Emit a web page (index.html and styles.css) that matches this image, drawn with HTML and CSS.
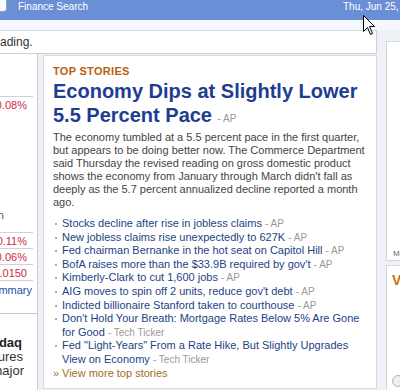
FILE: index.html
```html
<!DOCTYPE html>
<html>
<head>
<meta charset="utf-8">
<link rel="stylesheet" href="styles.css">
</head>
<body>
<div class="topbar">
  <div class="btn-edge"></div>
  <span class="brand">Finance Search</span>
  <span class="date">Thu, Jun 25, 2009</span>
</div>
<div class="band"></div>
<div class="wrap">
  <div class="leftmain">
    <div class="status">ading.</div>
    <div class="cols">
      <aside class="lcol">
        <div class="lc-top"></div>
        <div class="lc-row red">0.08%</div>
        <div class="lc-note">Currency Conversion</div>
        <div class="lc-row red first">0.11%</div>
        <div class="lc-row red">0.06%</div>
        <div class="lc-row red">1.0150</div>
        <div class="lc-row sum"><a>Summary</a></div>
        <div class="lc-section">
          <div class="lc-line bold r22">Nasdaq</div>
          <div class="lc-line r23">futures</div>
          <div class="lc-line r24">major</div>
        </div>
      </aside>
      <main class="panel">
        <div class="kicker">TOP STORIES</div>
        <h1 class="headline"><a>Economy Dips at Slightly Lower 5.5 Percent Pace</a> <span class="src">- AP</span></h1>
        <p class="summary">The economy tumbled at a 5.5 percent pace in the first quarter, but appears to be doing better now. The Commerce Department said Thursday the revised reading on gross domestic product shows the economy from January through March didn't fall as deeply as the 5.7 percent annualized decline reported a month ago.</p>
        <ul class="stories">
          <li><a>Stocks decline after rise in jobless claims</a> <span class="src">- AP</span></li>
          <li><a>New jobless claims rise unexpectedly to 627K</a> <span class="src">- AP</span></li>
          <li><a>Fed chairman Bernanke in the hot seat on Capitol Hill</a> <span class="src">- AP</span></li>
          <li><a>BofA raises more than the $33.9B required by gov't</a> <span class="src">- AP</span></li>
          <li><a>Kimberly-Clark to cut 1,600 jobs</a> <span class="src">- AP</span></li>
          <li><a>AIG moves to spin off 2 units, reduce gov't debt</a> <span class="src">- AP</span></li>
          <li><a>Indicted billionaire Stanford taken to courthouse</a> <span class="src">- AP</span></li>
          <li><a>Don't Hold Your Breath: Mortgage Rates Below 5% Are Gone for Good</a> <span class="src">- Tech Ticker</span></li>
          <li><a>Fed "Light-Years" From a Rate Hike, But Slightly Upgrades View on Economy</a> <span class="src">- Tech Ticker</span></li>
        </ul>
        <div class="more"><span class="raquo">»</span><a>View more top stories</a></div>
      </main>
    </div>
  </div>
  <div class="rcol">
    <div class="rpanel r1"><span class="tiny">Ma</span></div>
    <div class="rpanel r2"><span class="vhead">V</span><span class="circle"></span></div>
  </div>
</div>
<svg class="cursor" width="13" height="21" viewBox="0 0 13 21"><path d="M0.5 0.5 L0.5 16.5 L4.5 12.5 L7.5 19.5 L9.5 18.5 L6.5 11.5 L11.5 11.5 Z" fill="#fff" stroke="#000" stroke-width="1"/></svg>
</body>
</html>
```

FILE: styles.css
```css
body {
  margin: 0;
  width: 400px;
  height: 390px;
  overflow: hidden;
  position: relative;
  background: #eef1f5;
  font-family: "Liberation Sans", Arial, sans-serif;
}
a { text-decoration: none; }

.topbar {
  display: grid;
  grid-template-columns: 18px 325px max-content;
  width: 450px;
  height: 20px;
  background: #6b8fd6;
  color: #fff;
  font-size: 10px;
  line-height: 12px;
}
.btn-edge {
  width: 7px;
  height: 12px;
  box-sizing: border-box;
  background: #fbfbfc;
  border: 1px solid #8e9fbf;
  border-left: 0;
  border-top: 0;
  border-radius: 0 0 3px 0;
}
.brand, .date { padding-top: 1px; white-space: nowrap; }

.band { height: 10px; background: #f4f7fb; }

.wrap { display: flex; }
.leftmain { width: 377px; flex: none; }
.status {
  height: 22px;
  border-top: 1px solid #d5dae0;
  border-bottom: 1px solid #cfcfcf;
  border-right: 1px solid #cfcfcf;
  background: #fff;
  font-size: 12px;
  line-height: 22px;
  color: #333;
}
.cols { display: flex; align-items: flex-start; height: 340px; }

.lcol {
  width: 38px;
  height: 340px;
  flex: none;
  box-sizing: border-box;
  border-right: 1px solid #cfcfcf;
  background: #fff;
  overflow: hidden;
  font-size: 11px;
  white-space: nowrap;
}
.lc-top { height: 42px; }
.lc-row {
  display: flex;
  justify-content: flex-end;
  align-items: center;
  height: 16px;
  box-sizing: border-box;
  border-top: 1px solid #cdd3da;
  margin-right: 4px;
  padding-right: 6px;
}
.red { color: #cc2b3d; }
.lc-note {
  display: flex;
  justify-content: flex-end;
  align-items: center;
  height: 16px;
  margin-top: 95px;
  margin-bottom: 9px;
  padding-right: 33px;
  color: #555;
}
.lc-row.sum { height: 18px; padding-right: 1px; }
.sum a { color: #2a4a9e; }
.lc-section {
  margin-top: 15px;
  border-top: 1px solid #c4c4c4;
  padding-top: 22px;
  font-size: 13px;
  line-height: 14px;
  color: #333;
}
.lc-line { display: flex; justify-content: flex-end; }
.bold { font-weight: bold; color: #222; }
.r22 { padding-right: 15px; }
.r23 { padding-right: 14px; }
.r24 { padding-right: 13px; }

.panel {
  width: 334px;
  height: 334px;
  flex: none;
  box-sizing: border-box;
  margin: 1px 0 0 5px;
  border: 1px solid #d9dbde;
  background: #fff;
  padding: 9px 7px 0 9px;
  color: #444;
}
.kicker {
  font-size: 11px;
  line-height: 13px;
  font-weight: bold;
  color: #b8600f;
  letter-spacing: 0.3px;
}
.headline {
  margin: 1px 0 0;
  font-size: 20px;
  line-height: 24px;
  font-weight: bold;
}
.headline a { color: #1d3d93; }
.src { font-size: 10px; font-weight: normal; color: #999; }
.summary {
  margin: 0;
  font-size: 11px;
  line-height: 13px;
  color: #444;
}
.stories {
  list-style: none;
  margin: 8px 0 0;
  padding: 0;
  font-size: 11px;
  line-height: 13.6px;
}
.stories li {
  padding-left: 9px;
  background: linear-gradient(#aaa, #aaa) no-repeat 2px 6px / 2px 2px;
}
.stories a { color: #233f85; }
.more {
  font-size: 11px;
  line-height: 13.6px;
  display: flex;
}
.raquo { width: 9px; color: #9a7a3a; }
.more a { color: #a06f18; }

.rcol { flex: 1; padding: 11px 0 0 9px; }
.rpanel {
  box-sizing: border-box;
  background: #fff;
  border: 1px solid #d3d7dc;
  border-right: 0;
}
.r1 {
  height: 220px;
  display: flex;
  align-items: flex-end;
  padding: 0 0 2px 6px;
}
.tiny { font-size: 8px; line-height: 9px; color: #666; }
.r2 {
  margin-top: 4px;
  height: 130px;
  display: flex;
  flex-direction: column;
  padding: 6px 0 0 5px;
}
.vhead {
  font-size: 14px;
  line-height: 16px;
  font-weight: bold;
  color: #d06a12;
}
.circle {
  margin-top: 87px;
  width: 12px;
  height: 12px;
  box-sizing: border-box;
  border: 1px solid #b5b5b5;
  border-radius: 50%;
  background: #f0f0f0;
}
.cursor { position: absolute; left: 363px; top: 15px; }
```
